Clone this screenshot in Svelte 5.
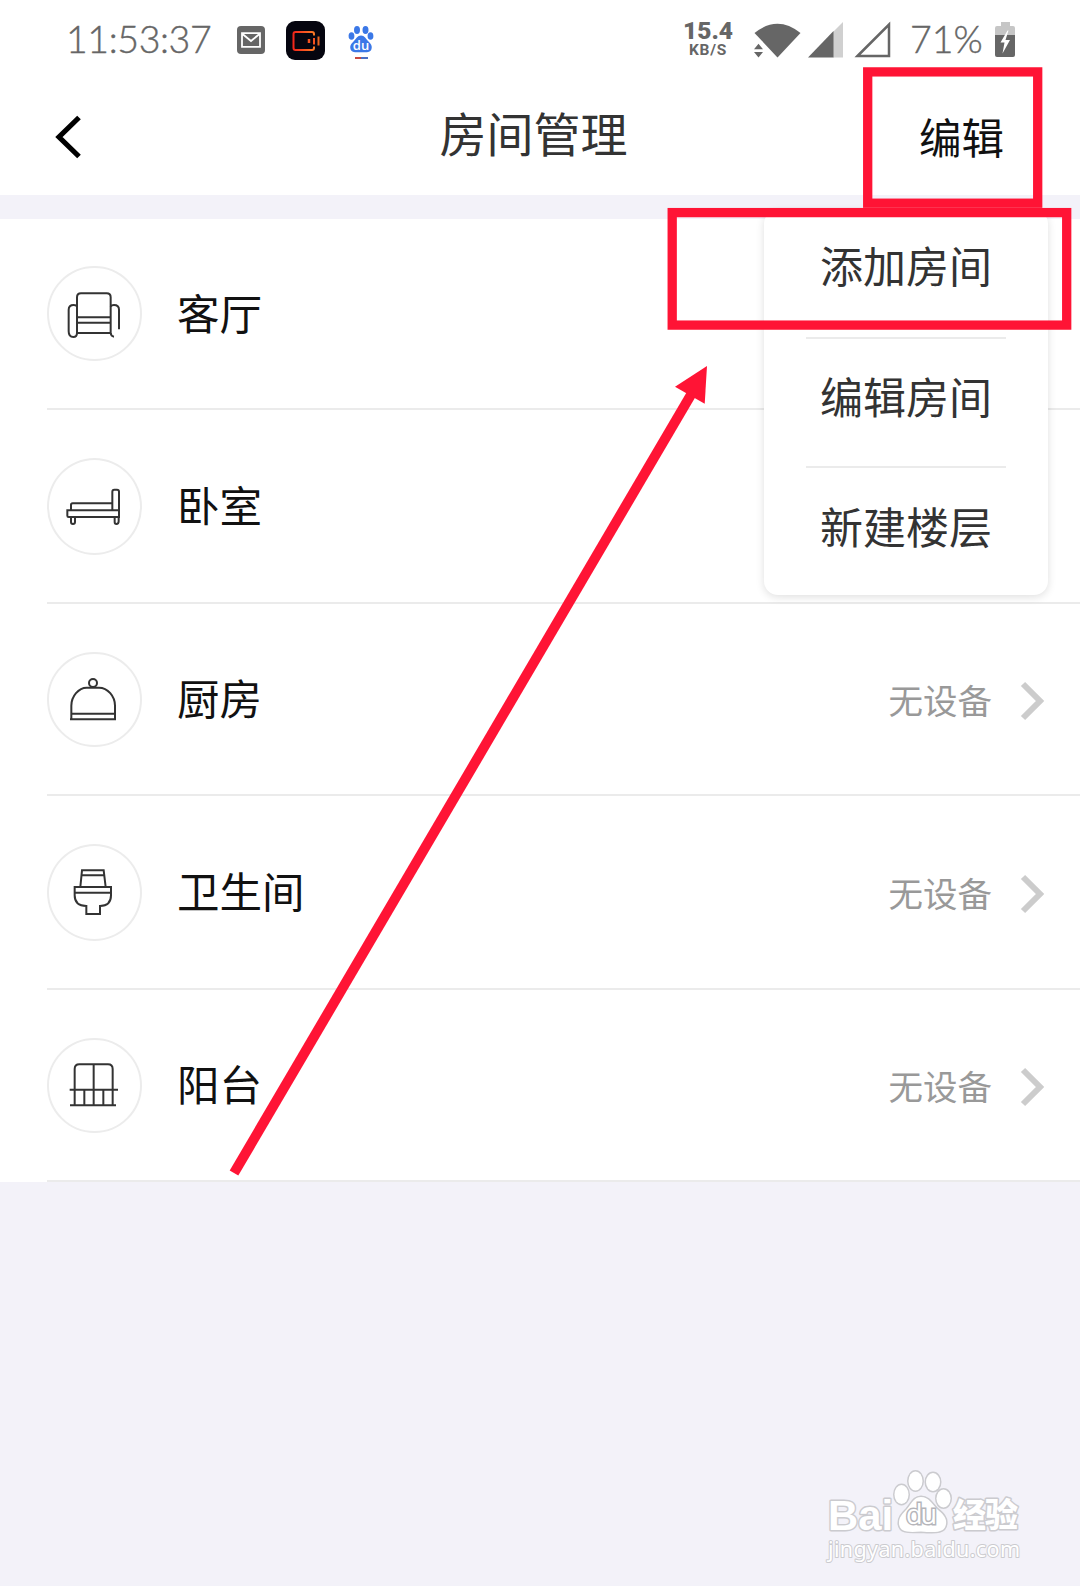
<script>
  const menu = ['添加房间', '编辑房间', '新建楼层']

  const rooms = [
    { name: '客厅', icon: 'sofa', status: '' },
    { name: '卧室', icon: 'bed', status: '' },
    { name: '厨房', icon: 'dish', status: '无设备' },
    { name: '卫生间', icon: 'toilet', status: '无设备' },
    { name: '阳台', icon: 'balcony', status: '无设备' }
  ]

  const icons = {
    sofa: [
      'M-51 57V-50Q-51-62-39-62H38Q50-62 50-50V57Z',
      'M-51 10H50M-51 26H50',
      'M-51-22Q-53-27-61-27Q-76-27-76-13V52Q-76 69-62 69Q-51 69-51 57',
      'M50-22Q52-27 60-27Q75-27 75-13V46M50 57Q51 67 60 68'
    ],
    bed: [
      'M-80 13H75V33H-76Q-80 33-80 29Z',
      'M-69 13V-3Q-69-8-64-8H55',
      'M55 13V-43Q55-49 61-49H69Q75-49 75-43V33',
      'M-69 33V48Q-69 54-63 54Q-57 54-57 48V33M62 33V48Q62 54 67 54Q74 54 74 46V33'
    ],
    dish: [
      'M-68 61V20C-68-8-46-34-22-34H15C41-34 63-8 63 20V61',
      'M-72 61H66M-68 44H63',
      'M-15-48A12 12 0 1 0 9-48A12 12 0 1 0-15-48'
    ],
    toilet: [
      'M-41-15L-36-65H29L35-15M-38-50H31',
      'M-58-15H51V10Q51 42 18 42V66H-23V42Q-58 42-58 10Z',
      'M-58 2H51'
    ],
    balcony: [
      'M-58 61V-48Q-58-62-44-62H42Q56-62 56-48V61',
      'M-1-62V61M-73 14H72M-72 61H66M-29 14V61M28 14V61'
    ]
  }
</script>

<div class="page">
  <div class="statusbar">
    <div class="left">
      <span class="clock">11:53:37</span>
      <svg class="mail" width="28" height="28" viewBox="0 0 28 28">
        <rect width="28" height="28" rx="4" fill="#666" />
        <path d="M5 7.2h18v13.6H5zM5.5 8l8.5 7 8.5-7" fill="none" stroke="#fff" stroke-width="1.8" />
      </svg>
      <svg class="recorder" width="39" height="39" viewBox="0 0 39 39">
        <defs>
          <linearGradient id="flame" x1="0" y1="0" x2="1" y2="0">
            <stop offset="0" stop-color="#f3261a" />
            <stop offset="1" stop-color="#fb7a25" />
          </linearGradient>
        </defs>
        <rect width="39" height="39" rx="9" fill="#05050f" />
        <path
          d="M28 14.500V13q0-2-2-2H9.500q-2 0-2 2v14q0 2 2 2H26q2 0 2-2v-1.500"
          fill="none"
          stroke="url(#flame)"
          stroke-width="2"
        />
        <path d="M23 18v4" stroke="#f3511f" stroke-width="2.500" />
        <path d="M28 17v6.500" stroke="#f3511f" stroke-width="2" />
        <path d="M32.500 15.500v9" stroke="#e8641f" stroke-width="2" />
      </svg>
      <svg class="baidu" width="26" height="34" viewBox="0 0 26 34">
        <g fill="#3b78e7">
          <ellipse cx="9" cy="4" rx="3" ry="4" />
          <ellipse cx="17.500" cy="4" rx="3" ry="4" />
          <ellipse cx="3.500" cy="10" rx="2.900" ry="3.800" />
          <ellipse cx="22.500" cy="10" rx="2.900" ry="3.800" />
          <path d="M13 9.500c3.500 0 5 3.500 7.500 6s4 4.500 3 7.500c-1 3.500-4.500 3.500-10.500 3.300C7 26.500 3.500 26.500 2.500 23c-1-3 .5-5 3-7.500s4-6 7.500-6z" />
        </g>
        <text x="13" y="23.500" text-anchor="middle" font-family="Open Sans, sans-serif" font-weight="600" font-size="13" fill="#fff">du</text>
        <path d="M7 32h6" stroke="#c8483f" stroke-width="2" />
        <path d="M13 32h7" stroke="#4a6fc4" stroke-width="2" />
      </svg>
    </div>

    <div class="right">
      <div class="speed">
        <b>15.4</b>
        <small>KB/S</small>
      </div>
      <svg class="wifi" width="47" height="36" viewBox="0 0 47 36" fill="#666">
        <path d="M.5 11Q23.500-7.500 46.500 11L23.500 35.500Z" />
        <path d="M0 27.300L4.500 21.800 9 27.300ZM0 30L4.500 35.500 9 30Z" />
      </svg>
      <svg class="signal" width="35" height="36" viewBox="0 0 35 36">
        <path d="M35 0V35.500H25V10Z" fill="#d0d0d0" />
        <path d="M0 35.500L25.500 9V35.500Z" fill="#666" />
      </svg>
      <svg class="signal2" width="36" height="36" viewBox="0 0 36 36">
        <path d="M2.500 34L34 2.500V34Z" fill="none" stroke="#666" stroke-width="2.500" />
      </svg>
      <span class="percent">71%</span>
      <svg class="battery" width="20" height="36" viewBox="0 0 20 36">
        <path d="M6 0h9v4h3q2 0 2 2v8H0V6q0-2 2-2h4z" fill="#c6c6c6" />
        <path d="M0 13h20v20q0 2-2 2H2q-2 0-2-2z" fill="#666" />
        <path d="M12.500 8.500L5.500 20.500H9.500L7.500 31.500L15 18H10.500L13.500 8.500Z" fill="#fff" />
      </svg>
    </div>
  </div>

  <header>
    <svg class="back" width="28" height="46" viewBox="0 0 28 46">
      <path d="M24 3.500L4 23L24 42.500" fill="none" stroke="#000" stroke-width="5.200" />
    </svg>
    <h1>房间管理</h1>
    <span class="edit">编辑</span>
  </header>

  <ul class="rooms">
    {#each rooms as room}
      <li>
        <span class="circle">
          <svg width="94" height="94" viewBox="-141 -141 282 282">
            {#each icons[room.icon] as d}
              <path {d} />
            {/each}
          </svg>
        </span>
        <span class="name">{room.name}</span>
        {#if room.status}
          <span class="status">{room.status}</span>
          <svg class="chevron" width="24" height="40" viewBox="0 0 24 40">
            <path d="M3 3L20 20L3 37" />
          </svg>
        {/if}
      </li>
    {/each}
  </ul>

  <div class="menu">
    {#each menu as item}
      <div class="item">{item}</div>
    {/each}
  </div>

  <svg class="marks" width="1080" height="1586" viewBox="0 0 1080 1586">
    <g fill="none" stroke="#ff1435">
      <rect x="867.700" y="71.900" width="170" height="131.300" stroke-width="9.300" />
      <rect x="672.200" y="212.600" width="394.500" height="112.500" stroke-width="9.300" />
      <path d="M234 1173L692 393" stroke-width="10" />
    </g>
    <path d="M707 366L675 386.700L704.700 403.700Z" fill="#ff1435" />
  </svg>

  <svg class="watermark" width="210" height="110" viewBox="0 0 210 110">
    <g fill="#fff" stroke="#cbcbcf" stroke-width="3" paint-order="stroke" stroke-linejoin="round">
      <text x="8" y="60" font-family="Liberation Sans, sans-serif" font-weight="700" font-size="43" textLength="65" lengthAdjust="spacingAndGlyphs">Bai</text>
      <ellipse cx="81.500" cy="24.500" rx="7" ry="9.500" />
      <ellipse cx="95.500" cy="11" rx="7" ry="9.500" />
      <ellipse cx="113" cy="12" rx="7" ry="9" />
      <ellipse cx="123.500" cy="28.500" rx="7" ry="9" />
      <path d="M101 27c8 0 11 7 16 12 6 5 10 9 9 15-1 8-8 9-25 7.500C87 62.500 80 62 79 54c-.5-6 3-10 8-15 5-6 7-12 14-12z" />
      <text x="133" y="57" font-family="Noto Sans CJK SC, sans-serif" font-weight="900" font-size="33" textLength="65">经验</text>
      <text x="8" y="87" font-family="Noto Sans, sans-serif" font-size="21.500" stroke-width="2" textLength="192">jingyan.baidu.com</text>
    </g>
    <text x="86" y="54" font-family="Open Sans, sans-serif" font-size="27" fill="#fff" stroke="#b5b5ba" stroke-width="3" paint-order="stroke" textLength="31">du</text>
  </svg>
</div>

<style>
  :global(body) {
    background: #f3f2f9;
  }

  .page {
    position: relative;
    width: 1080px;
    height: 1586px;
    overflow: hidden;
    background: #f3f2f9;
    font-family: 'Noto Sans CJK SC', sans-serif;
    color: #111;
  }

  svg {
    display: block;
    flex: none;
    overflow: visible;
  }

  .statusbar {
    height: 80px;
    box-sizing: border-box;
    padding: 0 65px 0 67px;
    display: flex;
    align-items: center;
    justify-content: space-between;
    background: #fff;
    color: #666;
  }

  .left,
  .right {
    display: flex;
    align-items: center;
  }

  .clock,
  .percent {
    font-family: Lato, sans-serif;
    font-weight: 300;
    font-size: 37.5px;
    line-height: 40px;
    white-space: nowrap;
    margin-bottom: 2px;
    -webkit-text-stroke: 0.4px #666;
  }

  .clock {
    width: 171px;
    margin-left: -1px;
    letter-spacing: -0.4px;
  }

  .recorder {
    margin-left: 21px;
  }

  .baidu {
    margin: 5px 0 0 23px;
  }

  .speed {
    width: 52px;
    margin: 0 20px 2px 0;
    display: flex;
    flex-direction: column;
    align-items: center;
    font-family: Roboto, sans-serif;
    font-weight: 700;
  }

  .speed b {
    font-size: 24.5px;
    line-height: 22px;
  }

  .speed small {
    font-size: 15.5px;
    line-height: 16px;
    letter-spacing: 0.8px;
  }

  .wifi {
    margin-right: 1px;
  }

  .signal {
    margin-left: 6px;
  }

  .signal2 {
    margin-left: 12px;
  }

  .percent {
    width: 72px;
    margin: 0 13px 2px 19px;
  }

  header {
    height: 115px;
    box-sizing: border-box;
    padding: 0 76px 0 55px;
    display: flex;
    align-items: center;
    justify-content: space-between;
    background: #fff;
  }

  .back {
    width: 28px;
    margin: 0 31px 2px 0;
  }

  h1 {
    margin: 0 0 11px 34px;
    font-weight: 400;
    font-size: 47px;
    line-height: 60px;
    color: #333;
  }

  .edit {
    margin-bottom: 3px;
    font-size: 42.5px;
    line-height: 60px;
  }

  .rooms {
    list-style: none;
    margin: 24px 0 0;
    padding: 0;
    background: #fff;
  }

  .rooms li {
    height: 192px;
    box-sizing: border-box;
    display: flex;
    align-items: center;
    margin-left: 47px;
    padding: 0 36px 0 0;
    border-bottom: 2px solid #ebebeb;
  }

  .rooms li:first-child {
    height: 191px;
  }

  .rooms li:nth-child(even) {
    height: 194px;
  }

  .circle {
    display: flex;
    align-items: center;
    justify-content: center;
    width: 95px;
    height: 95px;
    box-sizing: border-box;
    border: 2.5px solid #ececec;
    border-radius: 50%;
  }

  li:nth-child(even) .circle {
    height: 97px;
  }

  .circle svg {
    margin-right: 1px;
  }

  .circle path {
    fill: none;
    stroke: #333;
    stroke-width: 6;
  }

  .name {
    flex: 1;
    margin: 0 0 4px 35px;
    font-size: 42.5px;
    line-height: 60px;
  }

  .status {
    margin: 0 28px 0 0;
    font-size: 34.5px;
    line-height: 50px;
    color: #999;
  }

  .chevron {
    margin-top: 4px;
  }

  .chevron path {
    fill: none;
    stroke: #ccc;
    stroke-width: 6;
  }

  .menu {
    position: absolute;
    top: 210px;
    right: 32px;
    width: 284px;
    height: 385px;
    border-radius: 14px;
    background: #fff;
    box-shadow: 0 2px 8px rgba(0, 0, 0, 0.13);
  }

  .item {
    height: 129px;
    box-sizing: border-box;
    margin: 0 42px;
    padding-bottom: 16px;
    display: flex;
    align-items: center;
    justify-content: center;
    border-bottom: 2px solid #ebebeb;
    font-size: 43px;
    line-height: 60px;
    color: #333;
    white-space: nowrap;
  }

  .item:first-child {
    padding-bottom: 19px;
  }

  .item:last-child {
    border-bottom: 0;
  }

  .marks {
    position: absolute;
    top: 0;
    left: 0;
  }

  .watermark {
    position: absolute;
    left: 820px;
    top: 1470px;
  }
</style>
